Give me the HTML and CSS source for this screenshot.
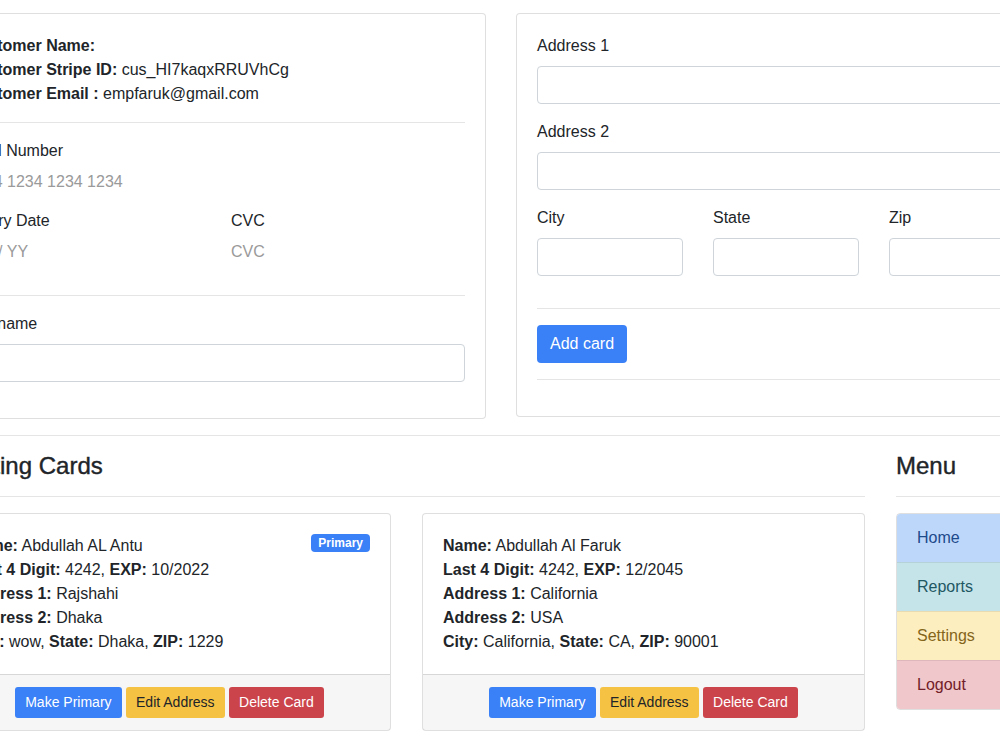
FILE: index.html
```html
<!DOCTYPE html>
<html lang="en">

<head>
    <meta charset="UTF-8">
    <meta name="viewport" content="width=device-width, initial-scale=1">
    <title>Cards</title>
    <link rel="stylesheet" href="styles.css">
</head>

<body>
    <div class="page">
        <div class="top-row">
            <div class="card">
                <div class="card-body">
                    <div><b>Customer Name:</b></div>
                    <div><b>Customer Stripe ID:</b> cus_HI7kaqxRRUVhCg</div>
                    <div><b>Customer Email :</b> empfaruk@gmail.com</div>
                    <hr class="rule">
                    <div class="field">
                        <label>Card Number</label>
                        <div class="stripe-input">1234 1234 1234 1234</div>
                    </div>
                    <div class="field-row">
                        <div class="field">
                            <label>Expiry Date</label>
                            <div class="stripe-input">MM / YY</div>
                        </div>
                        <div class="field">
                            <label>CVC</label>
                            <div class="stripe-input">CVC</div>
                        </div>
                    </div>
                    <hr class="rule">
                    <div class="field">
                        <label>Full name</label>
                        <input class="text-input" type="text">
                    </div>
                </div>
            </div>

            <div class="card">
                <div class="card-body">
                    <div class="field">
                        <label>Address 1</label>
                        <input class="text-input" type="text">
                    </div>
                    <div class="field">
                        <label>Address 2</label>
                        <input class="text-input" type="text">
                    </div>
                    <div class="address-row">
                        <div class="field">
                            <label>City</label>
                            <input class="text-input" type="text">
                        </div>
                        <div class="field">
                            <label>State</label>
                            <input class="text-input" type="text">
                        </div>
                        <div class="field">
                            <label>Zip</label>
                            <input class="text-input" type="text">
                        </div>
                    </div>
                    <hr class="rule">
                    <button class="btn btn-primary">Add card</button>
                    <hr class="rule">
                </div>
            </div>
        </div>

        <hr class="rule">

        <div class="bottom-row">
            <div class="cards-col">
                <h4 class="section-title">Existing Cards</h4>
                <hr class="rule title-rule">
                <div class="cards-grid">
                    <div class="card">
                        <div class="card-body">
                            <span class="badge">Primary</span>
                            <div><b>Name:</b> Abdullah AL Antu</div>
                            <div><b>Last 4 Digit:</b> 4242, <b>EXP:</b> 10/2022</div>
                            <div><b>Address 1:</b> Rajshahi</div>
                            <div><b>Address 2:</b> Dhaka</div>
                            <div><b>City:</b> wow, <b>State:</b> Dhaka, <b>ZIP:</b> 1229</div>
                        </div>
                        <div class="card-footer">
                            <button class="btn btn-sm btn-primary">Make Primary</button>
                            <button class="btn btn-sm btn-warning">Edit Address</button>
                            <button class="btn btn-sm btn-danger">Delete Card</button>
                        </div>
                    </div>
                    <div class="card">
                        <div class="card-body">
                            <div><b>Name:</b> Abdullah Al Faruk</div>
                            <div><b>Last 4 Digit:</b> 4242, <b>EXP:</b> 12/2045</div>
                            <div><b>Address 1:</b> California</div>
                            <div><b>Address 2:</b> USA</div>
                            <div><b>City:</b> California, <b>State:</b> CA, <b>ZIP:</b> 90001</div>
                        </div>
                        <div class="card-footer">
                            <button class="btn btn-sm btn-primary">Make Primary</button>
                            <button class="btn btn-sm btn-warning">Edit Address</button>
                            <button class="btn btn-sm btn-danger">Delete Card</button>
                        </div>
                    </div>
                </div>
            </div>

            <div class="menu-col">
                <h4 class="section-title">Menu</h4>
                <hr class="rule title-rule">
                <div class="menu">
                    <a class="menu-item menu-home" href="#">Home</a>
                    <a class="menu-item menu-reports" href="#">Reports</a>
                    <a class="menu-item menu-settings" href="#">Settings</a>
                    <a class="menu-item menu-logout" href="#">Logout</a>
                </div>
            </div>
        </div>
    </div>
</body>

</html>
```

FILE: styles.css
```css
* {
    box-sizing: border-box;
}

body {
    margin: 0;
    font-family: "Liberation Sans", Arial, sans-serif;
    font-size: 16px;
    line-height: 1.5;
    color: #212529;
    background-color: #fff;
    overflow: hidden;
}

.page {
    width: 1110px;
    margin-left: -54px;
    padding-top: 13px;
}

.top-row {
    display: grid;
    grid-template-columns: 540px 540px;
    gap: 30px;
    align-items: start;
}

.card {
    background-color: #fff;
    border: 1px solid rgba(0, 0, 0, 0.125);
    border-radius: 4px;
}

.card-body {
    padding: 20px;
}

.rule {
    margin: 16px 0;
    border: 0;
    border-top: 1px solid rgba(0, 0, 0, 0.1);
}

.field {
    margin-bottom: 16px;
}

.field label {
    display: block;
    margin-bottom: 8px;
}

.stripe-input {
    height: 22px;
    line-height: 22px;
    color: #9a9a9a;
}

.field-row {
    display: grid;
    grid-template-columns: 1fr 1fr;
    gap: 30px;
}

.address-row {
    display: grid;
    grid-template-columns: 1fr 1fr 1fr;
    gap: 30px;
}

.text-input {
    display: block;
    width: 100%;
    height: 38px;
    padding: 6px 12px;
    font: inherit;
    color: #495057;
    background-color: #fff;
    border: 1px solid #ced4da;
    border-radius: 4px;
}

.btn {
    display: inline-block;
    padding: 6px 12px;
    font-family: inherit;
    font-size: 16px;
    line-height: 24px;
    border: 1px solid transparent;
    border-radius: 4px;
    color: #fff;
    cursor: pointer;
}

.btn-sm {
    padding: 4px 9px;
    font-size: 14px;
    line-height: 21px;
    border-radius: 3px;
}

.btn-primary {
    background-color: #3a80f6;
}

.btn-warning {
    background-color: #f5c244;
    color: #212529;
}

.btn-danger {
    background-color: #cc444b;
}

.bottom-row {
    display: flex;
    gap: 31px;
    padding-left: 2px;
}

.cards-col {
    width: 917px;
    flex: none;
}

.menu-col {
    width: 285px;
    flex: none;
}

.section-title {
    margin: 0 0 15px;
    font-size: 24px;
    line-height: 28.8px;
    font-weight: 500;
    -webkit-text-stroke: 0.4px currentColor;
}

.title-rule {
    margin: 0 0 16px;
}

.cards-grid {
    display: grid;
    grid-template-columns: 443px 443px;
    gap: 31px;
}

.badge {
    float: right;
    padding: 3px 7px;
    font-size: 12px;
    font-weight: bold;
    line-height: 1;
    color: #fff;
    background-color: #3a80f6;
    border-radius: 4px;
}

.card-footer {
    padding: 12px 20px;
    text-align: center;
    background-color: rgba(0, 0, 0, 0.035);
    border-top: 1px solid rgba(0, 0, 0, 0.125);
}

.menu {
    border: 1px solid rgba(0, 0, 0, 0.125);
    border-radius: 4px;
    overflow: hidden;
}

.menu-item {
    display: block;
    padding: 12px 20px;
    text-decoration: none;
    border-top: 1px solid rgba(0, 0, 0, 0.08);
}

.menu-item:first-child {
    border-top: 0;
}

.menu-home {
    background-color: #bdd7fb;
    color: #1d4a8a;
}

.menu-reports {
    background-color: #c4e4ea;
    color: #1f5862;
}

.menu-settings {
    background-color: #fdeec0;
    color: #84651a;
}

.menu-logout {
    background-color: #f0c7cb;
    color: #722028;
}
```
